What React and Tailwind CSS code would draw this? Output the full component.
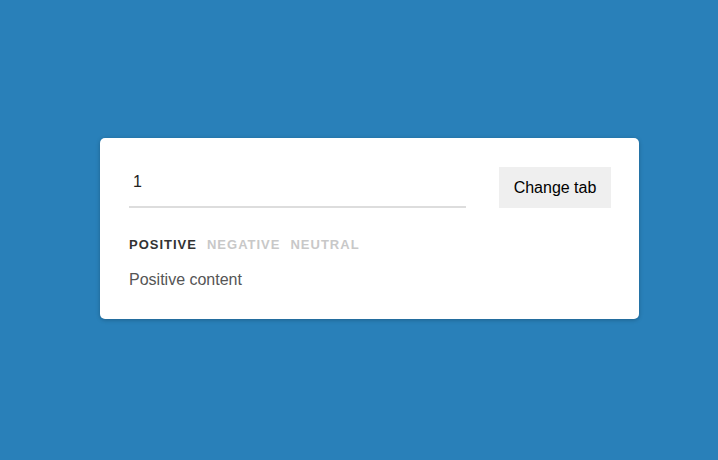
import { useState } from "react";

const tabs = ["positive", "negative", "neutral"];
const content = {
  positive: "Positive content",
  negative: "Negative content",
  neutral: "Neutral content",
};

export default function App() {
  const [active, setActive] = useState(0);
  const [value, setValue] = useState("1");

  return (
    <div className="flex h-[460px] w-full items-center bg-[#2980b9] pl-[100px] font-['Liberation_Sans',Arial,sans-serif]">
      <div className="mt-[-3px] w-[539px] rounded-[5px] bg-white pb-[29px] pl-[29px] pr-[28px] pt-[29px] shadow-[0_1px_4px_rgba(0,0,0,0.25)]">
        <div className="flex items-center justify-between">
          <input
            value={value}
            onChange={(e) => setValue(e.target.value)}
            className="h-[41px] w-[337px] border-b-2 border-[#dddddd] pb-[9px] pl-[4px] text-[16px] text-[#222] outline-none"
          />
          <button
            onClick={() => setActive((active + 1) % tabs.length)}
            className="h-[41px] w-[112px] bg-[#efefef] text-[16px] text-black"
          >
            Change tab
          </button>
        </div>

        <div className="mt-[29px] flex gap-[10px] text-[13px] font-bold uppercase leading-[16px] tracking-[1px]">
          {tabs.map((t, i) => (
            <span key={t} className={i === active ? "text-[#333]" : "text-[#c8c8c8]"}>
              {t}
            </span>
          ))}
        </div>

        <p className="mt-[17px] text-[16px] leading-[20px] text-[#555]">{content[tabs[active]]}</p>
      </div>
    </div>
  );
}
